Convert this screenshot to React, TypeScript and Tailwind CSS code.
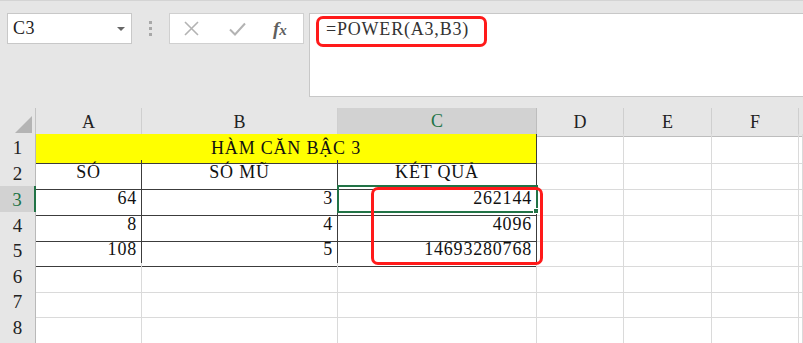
import React from "react";

const COLS = "grid grid-cols-[36px_106px_196px_199px_87px_88px_87px_1fr]";
const SERIF = "font-['Times_New_Roman','Liberation_Serif',serif]";

const rowHeights = ["h-[26px]", "h-[26px]", "h-[26px]", "h-[25px]", "h-[26px]", "h-[25px]", "h-[26px]", "h-[26px]"];

const grid = "border-r border-b border-[#dadada]";
const dark = "border-r border-b border-[#3c3c3c]";
const rowHead =
  "bg-[#e6e6e6] border-r border-b border-r-[#b9b9b9] border-b-[#d2d2d2] flex items-center justify-center text-[19px] text-[#222]";
const cellText = "text-[18px] tracking-[0.8px] text-[#111] leading-[25px] px-[4px] truncate";

type RowData = { a: string; b: string; c: string };
const data: RowData[] = [
  { a: "64", b: "3", c: "262144" },
  { a: "8", b: "4", c: "4096" },
  { a: "108", b: "5", c: "14693280768" },
];

function EmptyRest() {
  return (
    <>
      <div className={grid} />
      <div className={grid} />
      <div className={grid} />
      <div className={grid} />
    </>
  );
}

export default function App() {
  return (
    <div className={`relative w-[803px] h-[343px] overflow-hidden bg-white ${SERIF}`}>
      {/* Formula bar area */}
      <div className="h-[108px] bg-[#e6e6e6] border-t border-[#d4d4d4] flex items-start pt-[12px]">
        <div className="ml-[7px] w-[125px] h-[31px] bg-white border border-[#c8c8c8] flex items-center justify-between pl-[5px] pr-[6px]">
          <span className="text-[18px] tracking-[0.5px] leading-[31px] text-[#222]">C3</span>
          <svg width="8" height="4" viewBox="0 0 8 4">
            <path d="M0 0 L8 0 L4 4 Z" fill="#666" />
          </svg>
        </div>
        <div className="ml-[17px] w-[3px] h-[31px] flex flex-col items-center justify-center gap-[3px]">
          <div className="w-[3px] h-[3px] bg-[#a8a8a8]" />
          <div className="w-[3px] h-[3px] bg-[#a8a8a8]" />
          <div className="w-[3px] h-[3px] bg-[#a8a8a8]" />
        </div>
        <div className="ml-[17px] w-[135px] h-[31px] bg-white border border-[#d0d0d0] flex items-center pl-[14px]">
          <svg width="15" height="15" viewBox="0 0 15 15">
            <path d="M1 1 L14 14 M14 1 L1 14" stroke="#b3b3b3" strokeWidth="1.6" fill="none" />
          </svg>
          <svg className="ml-[30px]" width="17" height="14" viewBox="0 0 17 14">
            <path d="M1 7.5 L6 12.5 L16 1.5" stroke="#b3b3b3" strokeWidth="2" fill="none" />
          </svg>
          <span className="ml-[27px] italic font-semibold text-[19px] leading-none text-[#5f5f5f]">
            f<span className="text-[15px]">x</span>
          </span>
        </div>
        <div className="ml-[5px] flex-1 h-[84px] bg-white border border-r-0 border-[#c8c8c8] pl-[16px] pt-[3px]">
          <span className="text-[18px] tracking-[0.8px] leading-[24px] text-[#333]">=POWER(A3,B3)</span>
        </div>
      </div>

      {/* Column headers */}
      <div className={`${COLS} h-[26px]`}>
        <div className="bg-[#e6e6e6] border-r border-b border-[#c4c4c4] flex items-end justify-end pr-[3px] pb-[3px]">
          <svg width="17" height="17" viewBox="0 0 17 17">
            <path d="M17 0 L17 17 L0 17 Z" fill="#b4b4b4" />
          </svg>
        </div>
        <div className="bg-[#e6e6e6] border-r border-b border-r-[#cfcfcf] border-b-[#bdbdbd] flex items-center justify-center text-[18px] text-[#222]">A</div>
        <div className="bg-[#e6e6e6] border-r border-b border-r-[#cfcfcf] border-b-[#bdbdbd] flex items-center justify-center text-[18px] text-[#222]">B</div>
        <div className="bg-[#d2d2d2] border-r border-b-2 border-r-[#bdbdbd] border-b-[#217346] flex items-center justify-center text-[18px] text-[#217346]">C</div>
        <div className="bg-[#e6e6e6] border-r border-b border-r-[#cfcfcf] border-b-[#bdbdbd] flex items-center justify-center text-[18px] text-[#222]">D</div>
        <div className="bg-[#e6e6e6] border-r border-b border-r-[#cfcfcf] border-b-[#bdbdbd] flex items-center justify-center text-[18px] text-[#222]">E</div>
        <div className="bg-[#e6e6e6] border-r border-b border-r-[#cfcfcf] border-b-[#bdbdbd] flex items-center justify-center text-[18px] text-[#222]">F</div>
        <div className="bg-[#e6e6e6] border-b border-[#bdbdbd]" />
      </div>

      {/* Row 1 */}
      <div className={`${COLS} ${rowHeights[0]}`}>
        <div className={rowHead}>1</div>
        <div className={`col-span-3 bg-[#ffff00] ${dark} flex items-center justify-center`}>
          <span className="text-[18px] tracking-[0.8px] text-[#111]">HÀM CĂN BẬC 3</span>
        </div>
        <EmptyRest />
      </div>

      {/* Row 2 */}
      <div className={`${COLS} ${rowHeights[1]}`}>
        <div className={`${rowHead} border-r-[#3c3c3c]`}>2</div>
        <div className={`${dark} ${cellText} text-center`}>SÓ</div>
        <div className={`${dark} ${cellText} text-center`}>SÓ MŨ</div>
        <div className={`${dark} ${cellText} text-center`}>KÉT QUẢ</div>
        <EmptyRest />
      </div>

      {/* Data rows */}
      {data.map((r, i) => (
        <div key={i} className={`${COLS} ${rowHeights[i + 2]}`}>
          {i === 0 ? (
            <div className="bg-[#d2d2d2] border-b border-b-[#d2d2d2] border-r-2 border-r-[#217346] flex items-center justify-center text-[19px] text-[#217346]">
              3
            </div>
          ) : (
            <div className={`${rowHead} border-r-[#3c3c3c]`}>{i + 3}</div>
          )}
          <div className={`${dark} ${cellText} text-right`}>{r.a}</div>
          <div className={`${dark} ${cellText} text-right`}>{r.b}</div>
          <div className={`${dark} ${cellText} text-right`}>{r.c}</div>
          <EmptyRest />
        </div>
      ))}

      {/* Empty rows 6-8 */}
      {[6, 7, 8].map((n, i) => (
        <div key={n} className={`${COLS} ${rowHeights[i + 5]}`}>
          <div className={rowHead}>{n}</div>
          <div className={grid} />
          <div className={grid} />
          <div className={grid} />
          <EmptyRest />
        </div>
      ))}
      <div className={`${COLS} h-[10px]`}>
        <div className="bg-[#e6e6e6] border-r border-[#b9b9b9]" />
        <div className="border-r border-[#dadada]" />
        <div className="border-r border-[#dadada]" />
        <div className="border-r border-[#dadada]" />
        <div className="border-r border-[#dadada]" />
        <div className="border-r border-[#dadada]" />
        <div className="border-r border-[#dadada]" />
        <div />
      </div>

      {/* Selection of C3 */}
      <div className="absolute left-[337px] top-[185px] w-[201px] h-[28px] border-2 border-[#217346] pointer-events-none" />
      <div className="absolute left-[533px] top-[208px] w-[6px] h-[6px] bg-[#217346] border border-white pointer-events-none" />

      {/* Red annotation boxes */}
      <div className="absolute left-[316px] top-[16px] w-[171px] h-[31px] border-[3px] border-[#ff1a1a] rounded-[7px] pointer-events-none" />
      <div className="absolute left-[371px] top-[187px] w-[172px] h-[78px] border-[3px] border-[#ff1a1a] rounded-[7px] pointer-events-none" />
    </div>
  );
}
